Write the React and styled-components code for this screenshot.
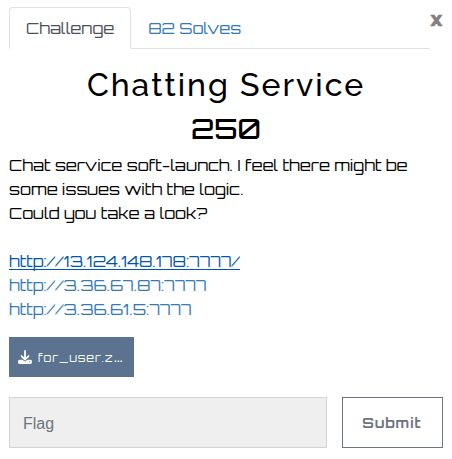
import React from 'react';
import styled, { createGlobalStyle } from 'styled-components';

const display = 'Orbitron, "DejaVu Sans", sans-serif';

const GlobalStyle = createGlobalStyle`
  *, *::before, *::after { box-sizing: border-box; }
  body { margin: 0; background: #fff; color: #000; font: 400 16px/24px ${display}; }
  a { text-decoration: none; }
`;

const Modal = styled.main`
  width: 452px;
  padding: 7px 9px 11px;
`;

const Header = styled.header`
  display: flex;
  height: 42px;
`;

const Tabs = styled.nav`
  display: flex;
  flex: 1;
  border-bottom: 1px solid #dee2e6;
`;

const Tab = styled.a`
  height: 42px;
  padding: 8px 16px;
  white-space: nowrap;
  border: 1px solid transparent;
  border-color: ${p => (p.$active ? '#dee2e6 #dee2e6 #fff' : 'transparent')};
  border-radius: 4px 4px 0 0;
  color: ${p => (p.$active ? '#495057' : '#337ab7')};
`;

const Close = styled.button`
  width: 13px;
  height: 25px;
  padding: 0;
  border: 0;
  background: none;
  color: #808080;
  font: 700 19px/25px "DejaVu Sans", sans-serif;
  -webkit-text-stroke: 0.5px currentColor;
`;

const Title = styled.h2`
  margin: 17px 0 0;
  text-align: center;
  font: 500 32px/38px Raleway, Lato, sans-serif;
  letter-spacing: 2px;
`;

const Points = styled.h3`
  margin: 8px 0 0;
  text-align: center;
  font: 500 28px/34px ${display};
`;

const Description = styled.div`
  margin-top: 7px;
  white-space: nowrap;
`;

const Line = styled.div`
  height: 24px;
`;

const Address = styled.a`
  color: ${p => (p.$hovered ? '#0056b3' : '#337ab7')};
  ${p => p.$hovered && 'box-shadow: 0 1px 0 #0056b3; display: inline-block; height: 20px;'}
`;

const Download = styled.a`
  display: flex;
  align-items: center;
  gap: 6px;
  width: 125px;
  height: 40px;
  margin-top: 16px;
  padding: 0 9px;
  background: #5b7290;
  color: #fff;
  font-size: 11.2px;
  letter-spacing: 1px;
  white-space: nowrap;
`;

const DownloadIcon = styled.svg`
  flex: none;
  width: 14px;
  height: 14px;
`;

const FileName = styled.span`
  padding-top: 1px;
`;

const Ellipsis = styled.span`
  font: 700 9px/12px "Liberation Sans", sans-serif;
  letter-spacing: 0;
`;

const Form = styled.form`
  display: grid;
  grid-template-columns: 318px 101px;
  gap: 15px;
  height: 51px;
  margin-top: 20px;
`;

const FlagInput = styled.input`
  min-width: 0;
  padding: 2px 13px 0;
  border: 1px solid #ced4da;
  border-radius: 0;
  background: #efefef;
  font: 16px/24px "Liberation Sans", sans-serif;
  &::placeholder { color: #6c757d; opacity: 1; }
`;

const Submit = styled.button`
  padding: 0 1px 0 0;
  border: 1px solid #6c757d;
  background: #fff;
  color: #6c757d;
  font: 700 14px/21px ${display};
  letter-spacing: 1px;
`;

export default function App() {
  return (
    <>
      <GlobalStyle />
      <Modal>
        <Header>
          <Tabs>
            <Tab $active>Challenge</Tab>
            <Tab>82 Solves</Tab>
          </Tabs>
          <Close aria-label="Close">x</Close>
        </Header>
        <Title>Chatting Service</Title>
        <Points>250</Points>
        <Description>
          <Line>Chat service soft-launch. I feel there might be</Line>
          <Line>some issues with the logic.</Line>
          <Line>Could you take a look?</Line>
          <Line />
          <Line><Address $hovered>http://13.124.148.178:7777/</Address></Line>
          <Line><Address>http://3.36.67.87:7777</Address></Line>
          <Line><Address>http://3.36.61.5:7777</Address></Line>
        </Description>
        <Download>
          <DownloadIcon viewBox="0 0 512 512" fill="currentColor">
            <path d="M288 32c0-17.700-14.300-32-32-32s-32 14.300-32 32V274.700l-73.400-73.400c-12.500-12.500-32.800-12.500-45.300 0s-12.500 32.800 0 45.300l128 128c12.500 12.500 32.800 12.500 45.300 0l128-128c12.500-12.500 12.500-32.800 0-45.300s-32.800-12.500-45.300 0L288 274.700V32zM64 352c-35.300 0-64 28.700-64 64v32c0 35.300 28.700 64 64 64H448c35.300 0 64-28.700 64-64V416c0-35.300-28.700-64-64-64H346.500l-45.300 45.300c-25 25-65.500 25-90.500 0L165.500 352H64zm368 56a24 24 0 1 1 0 48 24 24 0 1 1 0-48z" />
          </DownloadIcon>
          <FileName>for_user.z<Ellipsis>…</Ellipsis></FileName>
        </Download>
        <Form>
          <FlagInput placeholder="Flag" />
          <Submit type="button">Submit</Submit>
        </Form>
      </Modal>
    </>
  );
}
